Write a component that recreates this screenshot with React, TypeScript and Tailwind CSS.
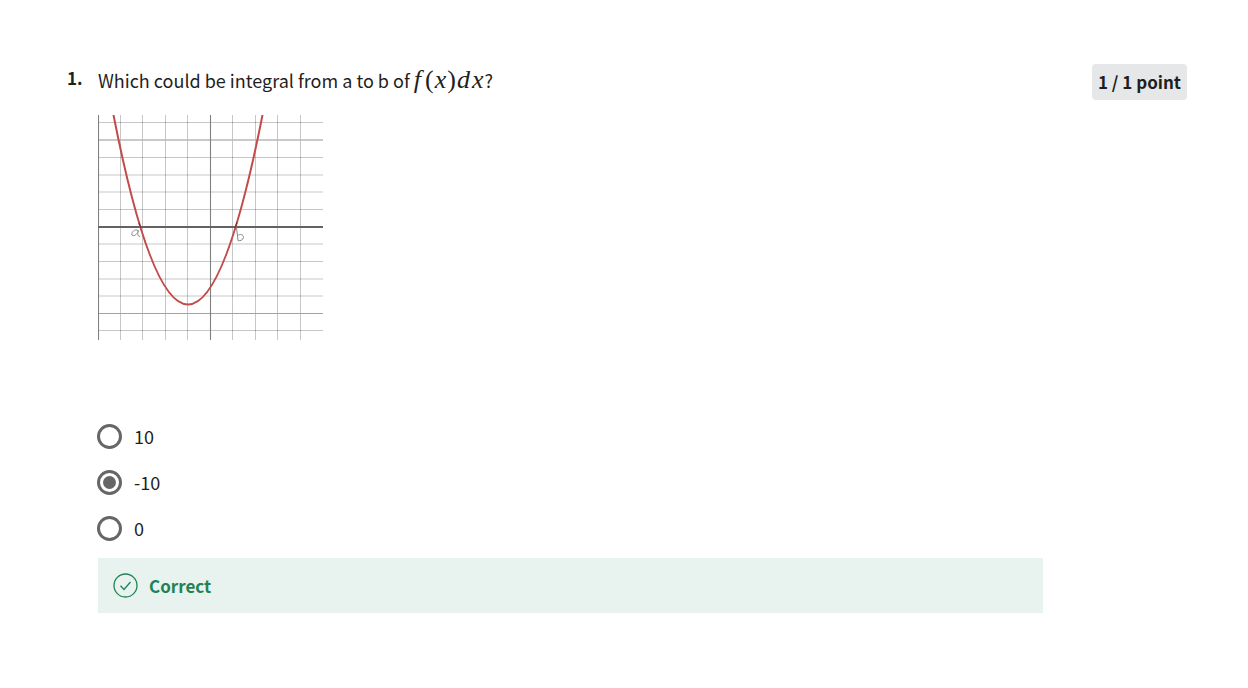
import { useState } from 'react';

const verticals = [22.5, 44.5, 67.5, 89.5, 134.5, 157.5, 179.5, 202.5];
const horizontals = [7.5, 42.5, 60, 77, 94.5, 129, 146.5, 164, 181, 215.5];
const options = ['10', '-10', '0'];

function Graph() {
  return (
    <svg
      role="img"
      aria-label="Parabola crossing the x axis at a and b, below the axis between them"
      viewBox="0 0 225 225"
      className="block h-[225px] w-[225px]"
      fill="none"
    >
      <g stroke="#000000" strokeOpacity="0.22">
        {verticals.map((x) => (
          <path key={x} d={`M${x} 0V225`} />
        ))}
        {horizontals.map((y) => (
          <path key={y} d={`M0 ${y}H225`} />
        ))}
      </g>
      <path d="M0 25H225" stroke="#b4b8b8" strokeWidth="1.7" />
      <path d="M0 198.5H225" stroke="#a0a5a2" strokeWidth="1.2" />
      <path d="M0.5 0V225M112.500 0V225" stroke="#808080" strokeWidth="1.1" />
      <path d="M0 112H225" stroke="#666263" strokeWidth="2" />
      <path d="M15.5 0Q90 379 164.5 0" stroke="#c24a48" strokeWidth="2" />
      <path d="M41 108l2 5M137 113l2-6" stroke="#603638" />
      <path
        d="M40 115.500C37 113.500 33 117 34 120C36 122.500 40 118 40.500 115.500C39.500 118 39 121 42 121.500"
        stroke="#8a8a8a"
      />
      <path
        d="M138.500 112.500L140 125.500M140 120.500C141 118.500 146 119.500 145.500 122.500C145 125.500 141.500 126 140 125.500"
        stroke="#858585"
      />
    </svg>
  );
}

export default function App() {
  const [answer, setAnswer] = useState('-10');

  return (
    <main className="flex items-start bg-white pt-16 pr-[61px] pb-[75px] pl-[67px] font-['Noto_Sans_CJK_SC',sans-serif] text-lg leading-7 text-[#1f1f1f]">
      <span className="w-[31px] shrink-0 text-[17px] leading-7 font-bold">1.</span>
      <section className="min-w-0 flex-1">
        <h1 className="mb-[19px] leading-8">
          Which could be integral from a to b of{' '}
          <span className="font-['Liberation_Serif',serif] text-[26px] leading-8">
            <i className="pr-1">f</i>(<i className="px-px">x</i>)<i className="px-px">d</i>
            <i className="px-px">x</i>
          </span>
          ?
        </h1>
        <Graph />
        <fieldset aria-label="Answer" className="mt-[82px] flex flex-col gap-[18px]">
          {options.map((option) => (
            <label key={option} className="-ml-px flex items-center gap-3">
              <input
                type="radio"
                name="answer"
                value={option}
                checked={answer === option}
                onChange={() => setAnswer(option)}
                className="grid size-[25px] appearance-none place-content-center rounded-full border-3 border-[#666666] before:size-[13px] before:rounded-full checked:before:bg-[#666666]"
              />
              <span>{option}</span>
            </label>
          ))}
        </fieldset>
        <div className="mt-4 flex items-center gap-[10px] bg-[#e8f2ee] px-[15px] pt-[14px] pb-[13px] text-[17px] font-bold text-[#1f8354]">
          <svg viewBox="0 0 26 26" className="size-[26px]" fill="none" stroke="currentColor" aria-hidden="true">
            <circle cx="12.500" cy="12.500" r="11.500" strokeWidth="1.3" />
            <path d="M7.500 12.800l3.500 3.700 6.500-7.500" strokeWidth="1.3" />
          </svg>
          <span>Correct</span>
        </div>
      </section>
      <div className="ml-[49px] shrink-0 rounded bg-[#e5e7e8] px-[6px] py-1 text-[17px] font-bold">1 / 1 point</div>
    </main>
  );
}
